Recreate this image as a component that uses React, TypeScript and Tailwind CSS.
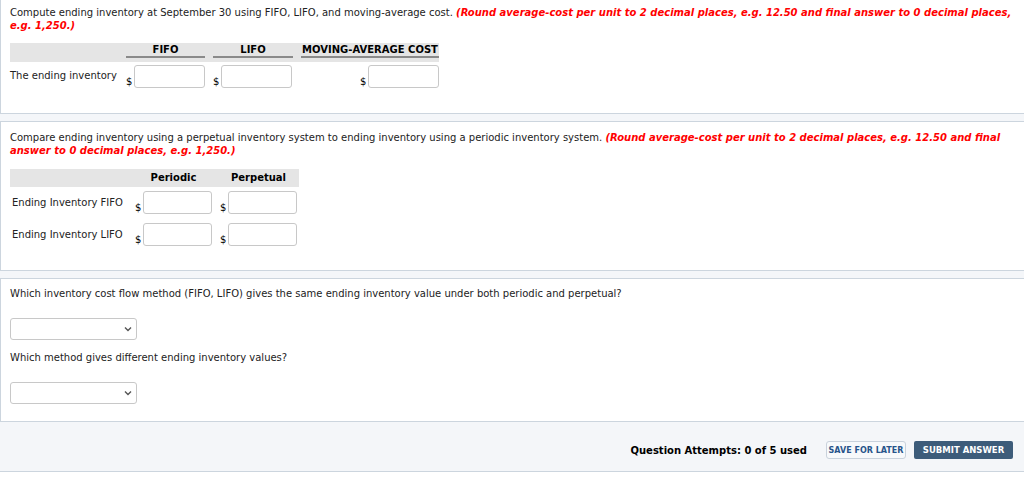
import React from "react";

const font = { fontFamily: '"DejaVu Sans", Verdana, sans-serif' };

function Money({ className = "" }: { className?: string }) {
  return (
    <div className={"flex items-end " + className}>
      <span className="text-[10px] leading-[12px] text-black w-[8px]">$</span>
      <div className="w-[71px] h-[23px] bg-white border border-[#c8c8c8] rounded-[3px]" />
    </div>
  );
}

function Select() {
  return (
    <div className="w-[127px] h-[22px] bg-white border border-[#c8c8c8] rounded-[3px] flex items-center justify-end pr-[4px]">
      <svg width="8" height="6" viewBox="0 0 8 6">
        <path d="M1 1.5 L4 4.5 L7 1.5" fill="none" stroke="#555" strokeWidth="1.4" />
      </svg>
    </div>
  );
}

export default function App() {
  return (
    <div className="w-[1024px] h-[482px] bg-white text-[10px] leading-[13px] text-[#222] overflow-hidden" style={font}>
      <div className="bg-[#f4f6f9]">
        {/* Section 1 */}
        <div className="bg-white border-l border-b border-[#ccd5de] h-[114px] pl-[9px] pt-[6px]">
          <p className="pr-[10px]">
            <span>Compute ending inventory at September 30 using FIFO, LIFO, and moving-average cost. </span>
            <span className="text-[#ff0000] font-bold italic">
              (Round average-cost per unit to 2 decimal places, e.g. 12.50 and final answer to 0 decimal places,{" "}
            </span>
            <span className="text-[#ff0000] font-bold italic">e.g. 1,250.)</span>
          </p>
          <div className="mt-[11px] w-[429px]">
            <div className="flex bg-[#e5e5e5] h-[19px] items-end pb-[4px]">
              <div className="w-[116px]" />
              <div className="w-[79px] border-b-2 border-[#8a8a8a] text-center font-bold text-[10px] leading-[12px] text-black">FIFO</div>
              <div className="w-[8px]" />
              <div className="w-[80px] border-b-2 border-[#8a8a8a] text-center font-bold text-[10px] leading-[12px] text-black">LIFO</div>
              <div className="w-[8px]" />
              <div className="w-[138px] border-b-2 border-[#8a8a8a] text-center font-bold text-[10px] leading-[12px] text-black">MOVING-AVERAGE COST</div>
            </div>
            <div className="flex mt-[3px]">
              <div className="w-[116px] pt-[4px]">The ending inventory</div>
              <Money className="w-[79px]" />
              <div className="w-[8px]" />
              <Money className="w-[80px]" />
              <div className="w-[8px]" />
              <Money className="w-[138px] justify-end" />
            </div>
          </div>
        </div>

        <div className="h-[7px]" />

        {/* Section 2 */}
        <div className="bg-white border-l border-t border-b border-[#ccd5de] h-[150px] pl-[9px] pt-[9px]">
          <p className="pr-[20px]">
            <span>Compare ending inventory using a perpetual inventory system to ending inventory using a periodic inventory system. </span>
            <span className="text-[#ff0000] font-bold italic">
              (Round average-cost per unit to 2 decimal places, e.g. 12.50 and final{" "}
            </span>
            <span className="text-[#ff0000] font-bold italic">answer to 0 decimal places, e.g. 1,250.)</span>
          </p>
          <div className="mt-[12px] w-[289px]">
            <div className="flex bg-[#e5e5e5] h-[18px] items-center">
              <div className="w-[125px]" />
              <div className="w-[77px] text-center font-bold text-[10px] leading-[12px] text-black">Periodic</div>
              <div className="w-[8px]" />
              <div className="w-[77px] text-center font-bold text-[10px] leading-[12px] text-black">Perpetual</div>
            </div>
            <div className="flex mt-[4px]">
              <div className="w-[125px] pl-[2px] pt-[5px]">Ending Inventory FIFO</div>
              <Money className="w-[77px] justify-end" />
              <div className="w-[8px]" />
              <Money className="w-[77px] justify-end" />
            </div>
            <div className="flex mt-[9px]">
              <div className="w-[125px] pl-[2px] pt-[5px]">Ending Inventory LIFO</div>
              <Money className="w-[77px] justify-end" />
              <div className="w-[8px]" />
              <Money className="w-[77px] justify-end" />
            </div>
          </div>
        </div>

        <div className="h-[7px]" />

        {/* Section 3 */}
        <div className="bg-white border-l border-t border-b border-[#ccd5de] h-[144px] pl-[9px] pt-[8px]">
          <p>
            Which inventory cost flow method (FIFO, LIFO) gives the same ending inventory value under both periodic and perpetual?
          </p>
          <div className="mt-[18px]">
            <Select />
          </div>
          <p className="mt-[11px]">Which method gives different ending inventory values?</p>
          <div className="mt-[18px]">
            <Select />
          </div>
        </div>

        {/* Footer */}
        <div className="h-[50px] border-b border-[#ccd5de] flex items-center justify-end pr-[11px] pt-[7px]">
          <span className="font-bold text-[10px] text-black mr-[19px]">Question Attempts: 0 of 5 used</span>
          <div className="w-[80px] h-[18px] border border-[#c9d2dc] bg-[#f7f9fb] rounded-[3px] flex items-center justify-center text-[8px] font-bold text-[#27548a] mr-[8px]">
            SAVE FOR LATER
          </div>
          <div className="w-[99px] h-[18px] bg-[#3d5c7a] rounded-[2px] flex items-center justify-center text-[8.5px] font-bold text-white">
            SUBMIT ANSWER
          </div>
        </div>
      </div>
    </div>
  );
}
